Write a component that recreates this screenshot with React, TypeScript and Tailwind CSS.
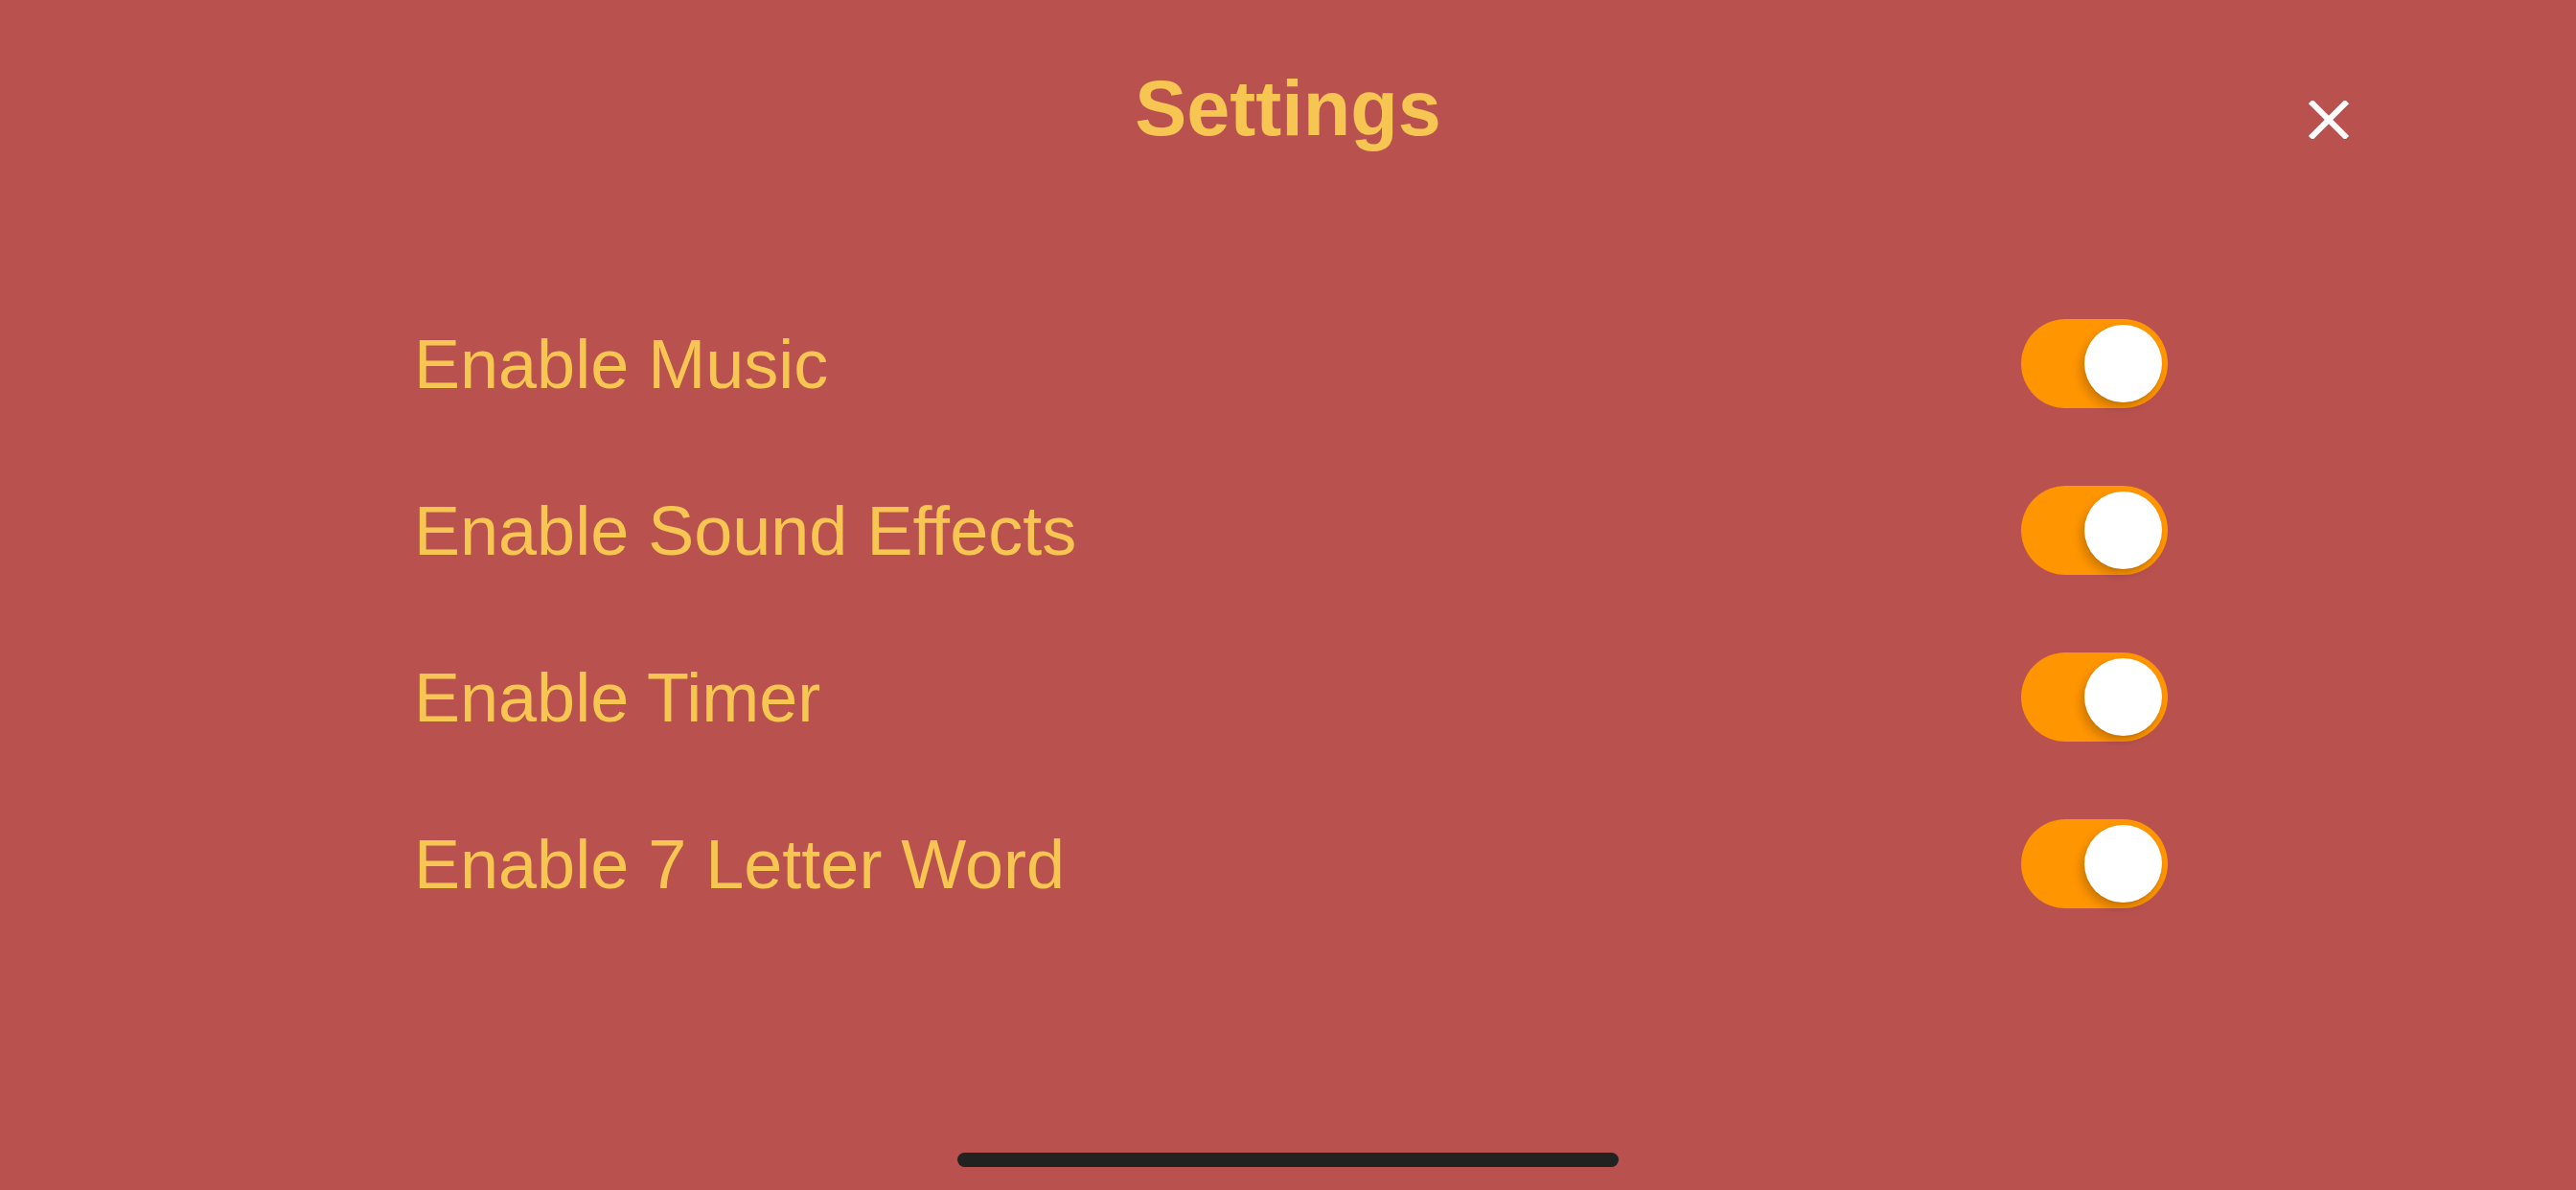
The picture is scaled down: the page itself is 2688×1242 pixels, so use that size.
import { useState } from "react";

interface SettingRow {
    id: string;
    label: string;
}

const rows: SettingRow[] = [
    { id: "music", label: "Enable Music" },
    { id: "sfx", label: "Enable Sound Effects" },
    { id: "timer", label: "Enable Timer" },
    { id: "seven", label: "Enable 7 Letter Word" },
];

const Toggle: React.FC<{ on: boolean; onChange: () => void }> = ({ on, onChange }) => (
    <button
        onClick={onChange}
        className={`flex h-[93px] w-[153px] items-center rounded-full px-[6px] ${
            on ? "justify-end bg-[#ff9500]" : "justify-start bg-[#e9e9ea]"
        }`}
    >
        <span className="block h-[81px] w-[81px] rounded-full bg-white shadow-[-4px_6px_10px_rgba(0,0,0,0.18),0_2px_2px_rgba(0,0,0,0.06)]" />
    </button>
);

const App: React.FC = () => {
    const [values, setValues] = useState<Record<string, boolean>>({
        music: true,
        sfx: true,
        timer: true,
        seven: true,
    });

    return (
        <div
            className="flex h-[1242px] w-[2688px] flex-col bg-[#b9524f] text-[#f7c652]"
            style={{ fontFamily: '"Liberation Sans", Arial, sans-serif' }}
        >
            <header className="grid grid-cols-[1fr_auto_1fr] pt-[73px]">
                <div />
                <h1 className="text-[81px] font-bold leading-none">Settings</h1>
                <div className="flex justify-end pr-[237px]">
                    <button className="mt-[32px] self-start">
                        <svg width="42" height="40" viewBox="0 0 42 40">
                            <path d="M2 1 L40 39 M40 1 L2 39" stroke="#fff" strokeWidth="6" />
                        </svg>
                    </button>
                </div>
            </header>

            <main className="mt-[179px] flex flex-col gap-[81px] pl-[432px] pr-[426px]">
                {rows.map((row) => (
                    <div key={row.id} className="flex items-center justify-between">
                        <span className="text-[72px] leading-none">{row.label}</span>
                        <Toggle
                            on={values[row.id]}
                            onChange={() => setValues({ ...values, [row.id]: !values[row.id] })}
                        />
                    </div>
                ))}
            </main>

            <div className="mt-auto mb-[24px] flex justify-center">
                <div className="h-[15px] w-[690px] rounded-full bg-[#222222]" />
            </div>
        </div>
    );
};

export default App;
